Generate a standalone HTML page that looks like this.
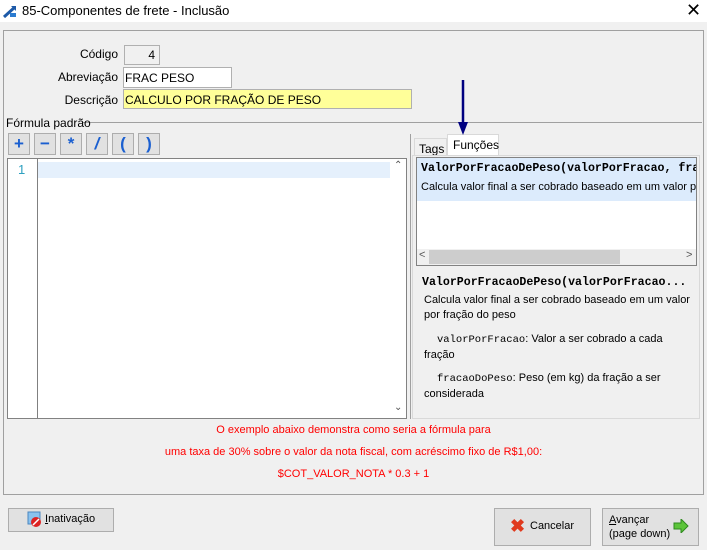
<!DOCTYPE html>
<html><head><meta charset="utf-8"><style>
*{box-sizing:border-box;margin:0;padding:0}
body{width:707px;height:550px;background:#f0f0f0;font-family:"Liberation Sans",sans-serif;font-size:12px;color:#000;position:relative;overflow:hidden}
.a{position:absolute}
.mono{font-family:"Liberation Mono","DejaVu Sans Mono",monospace}
.btn{position:absolute;background:#e1e1e1;border:1px solid #adadad}
.tb{position:absolute;top:133px;width:22px;height:22px;background:#e1e1e1;border:1px solid #adadad;color:#1a5fd0;font-weight:bold;text-align:center;font-size:17px;line-height:19px}
.red{position:absolute;left:0;width:707px;text-align:center;color:#ff0000;font-size:11px}
</style></head><body>
<div class="a" style="left:0;top:0;width:707px;height:22px;background:#fff"></div>
<svg class="a" style="left:2px;top:4px" width="16" height="14"><path d="M2 13 L13 3" stroke="#1e5aa8" stroke-width="3"/><path d="M9 2 L14 2 L14 7Z" fill="#1e5aa8"/><rect x="8" y="9" width="6" height="4" fill="#2b7bd0"/></svg>
<div class="a" style="left:22px;top:3px;font-size:13px">85-Componentes de frete - Inclusão</div>
<div class="a" style="left:686px;top:0px;font-size:18px;font-weight:300">✕</div>

<div class="a" style="left:3px;top:30px;width:701px;height:465px;border:1px solid #a0a0a0"></div>

<div class="a" style="left:0;top:47px;width:118px;text-align:right">Código</div>
<div class="a" style="left:124px;top:45px;width:36px;height:20px;border:1px solid #b0b0b0;background:#f0f0f0;text-align:right;padding:2px 4px">4</div>
<div class="a" style="left:0;top:70px;width:118px;text-align:right">Abreviação</div>
<div class="a" style="left:123px;top:67px;width:109px;height:21px;border:1px solid #b0b0b0;background:#fff;padding:3px 1px">FRAC PESO</div>
<div class="a" style="left:0;top:93px;width:118px;text-align:right">Descrição</div>
<div class="a" style="left:123px;top:89px;width:289px;height:20px;border:1px solid #b0b0b0;background:#ffff99;padding:3px 1px">CALCULO POR FRAÇÃO DE PESO</div>

<div class="a" style="left:82px;top:122px;width:620px;border-top:1px solid #a0a0a0"></div>
<div class="a" style="left:6px;top:116px">Fórmula padrão</div>

<div class="tb" style="left:8px">+</div>
<div class="tb" style="left:34px">−</div>
<div class="tb" style="left:60px">*</div>
<div class="tb" style="left:86px;font-style:italic">/</div>
<div class="tb" style="left:112px">(</div>
<div class="tb" style="left:138px">)</div>

<div class="a" style="left:7px;top:158px;width:400px;height:261px;border:1px solid #828282;background:#fff"></div>
<div class="a" style="left:37px;top:159px;width:1px;height:259px;background:#808080"></div>
<div class="a" style="left:38px;top:162px;width:352px;height:16px;background:#e5f0fc"></div>
<div class="a" style="left:18px;top:162px;color:#2ea0c0;font-size:13px">1</div>
<div class="a" style="left:394px;top:160px;font-size:10px;color:#555">⌃</div>
<div class="a" style="left:394px;top:402px;font-size:10px;color:#555">⌄</div>
<div class="a" style="left:410px;top:134px;width:1px;height:285px;background:#a0a0a0"></div>

<div class="a" style="left:414px;top:138px;width:33px;height:18px;border:1px solid #d9d9d9;border-bottom:none;padding:3px 4px">Tags</div>
<div class="a" style="left:447px;top:134px;width:52px;height:22px;border:1px solid #d9d9d9;border-bottom:none;background:#fff;padding:3px 5px">Funções</div>
<div class="a" style="left:412px;top:155px;width:288px;height:264px;border:1px solid #d9d9d9;background:#f0f0f0"></div>
<div class="a" style="left:416px;top:157px;width:281px;height:109px;border:1px solid #828282;background:#fff;overflow:hidden">
 <div style="height:43px;background:#dcebfc;padding:4px 4px;white-space:nowrap">
  <div class="mono" style="font-weight:bold;font-size:11.6px">ValorPorFracaoDePeso(valorPorFracao, fracaoDoPeso)</div>
  <div style="margin-top:6px;font-size:11px">Calcula valor final a ser cobrado baseado em um valor por fração</div>
 </div>
 <div class="a" style="left:0;top:91px;width:279px;height:16px;background:#f0f0f0"></div>
 <div class="a" style="left:12px;top:92px;width:191px;height:14px;background:#cdcdcd"></div>
 <div class="a" style="left:2px;top:91px;font-size:11px;color:#555">&lt;</div>
 <div class="a" style="left:269px;top:91px;font-size:11px;color:#555">&gt;</div>
</div>
<div class="a mono" style="left:422px;top:276px;font-weight:bold;font-size:11.6px">ValorPorFracaoDePeso(valorPorFracao...</div>
<div class="a" style="left:424px;top:293px;width:270px;font-size:11px;line-height:15px">Calcula valor final a ser cobrado baseado em um valor por fração do peso</div>
<div class="a" style="left:424px;top:332px;width:240px;font-size:11px;line-height:15px"><span class="mono" style="padding-left:13px;font-size:10.5px">valorPorFracao</span>: Valor a ser cobrado a cada fração</div>
<div class="a" style="left:424px;top:371px;width:240px;font-size:11px;line-height:15px"><span class="mono" style="padding-left:13px;font-size:10.5px">fracaoDoPeso</span>: Peso (em kg) da fração a ser considerada</div>

<svg class="a" style="left:458px;top:80px" width="10" height="56"><path d="M5 0 L5 48" stroke="#000080" stroke-width="2.5"/><path d="M0 42 L10 42 L5 55Z" fill="#000080"/></svg>

<div class="red" style="top:424px">O exemplo abaixo demonstra como seria a fórmula para</div>
<div class="red" style="top:446px">uma taxa de 30% sobre o valor da nota fiscal, com acréscimo fixo de R$1,00:</div>
<div class="red" style="top:468px">$COT_VALOR_NOTA * 0.3 + 1</div>

<div class="btn" style="left:8px;top:508px;width:106px;height:24px"></div>
<svg class="a" style="left:27px;top:511px" width="16" height="17"><rect x="1" y="1" width="12" height="12" fill="#8ac2ee" stroke="#4a86c0"/><circle cx="9" cy="11" r="5" fill="#d22"/><path d="M6 14 L12 8" stroke="#fff" stroke-width="1.5"/></svg>
<div class="a" style="left:45px;top:513px;font-size:11px"><u>I</u>nativação</div>

<div class="btn" style="left:494px;top:508px;width:97px;height:38px"></div>
<div class="a" style="left:510px;top:516px;color:#e03a1e;font-size:18px;font-weight:bold">✖</div>
<div class="a" style="left:530px;top:520px;font-size:11px">Cancelar</div>

<div class="btn" style="left:602px;top:508px;width:97px;height:38px"></div>
<div class="a" style="left:609px;top:513px;font-size:11px;line-height:14px"><u>A</u>vançar<br>(page down)</div>
<svg class="a" style="left:673px;top:519px" width="16" height="14"><path d="M1 4 L8 4 L8 0 L15 7 L8 14 L8 10 L1 10Z" fill="#5cc43a" stroke="#2e8a1e"/></svg>
</body></html>
